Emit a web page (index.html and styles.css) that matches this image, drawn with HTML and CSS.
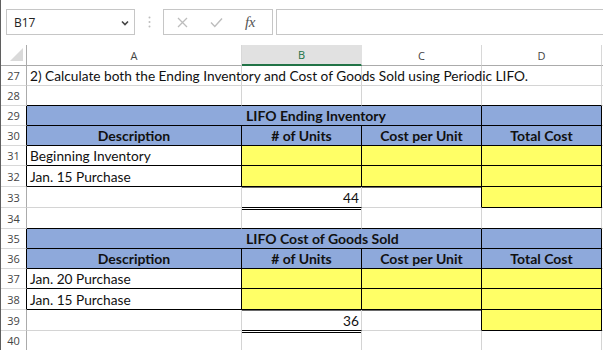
FILE: index.html
```html
<!DOCTYPE html>
<html>
<head>
<meta charset="utf-8">
<link rel="stylesheet" href="styles.css">
</head>
<body>
<div class="app">
  <div class="fbar">
    <div class="namebox">
      <span class="nb-text">B17</span>
      <svg class="chev" width="8" height="6" viewBox="0 0 8 6"><path d="M1 1.5 L4 4.5 L7 1.5" fill="none" stroke="#444" stroke-width="1.6"/></svg>
    </div>
    <div class="dots">
      <svg width="3" height="12" viewBox="0 0 3 12"><circle cx="1.5" cy="1.5" r="1" fill="#bdbdbd"/><circle cx="1.5" cy="6" r="1" fill="#bdbdbd"/><circle cx="1.5" cy="10.5" r="1" fill="#bdbdbd"/></svg>
    </div>
    <div class="fxbox">
      <svg class="ico-x" width="11" height="11" viewBox="0 0 11 11"><path d="M1 1 L10 10 M10 1 L1 10" stroke="#bdbdbd" stroke-width="1.3" fill="none"/></svg>
      <svg class="ico-ok" width="13" height="11" viewBox="0 0 13 11"><path d="M1 5.5 L4.8 9.5 L12 1.5" stroke="#bdbdbd" stroke-width="1.4" fill="none"/></svg>
      <span class="fx">fx</span>
    </div>
    <div class="finput"></div>
  </div>

  <div class="sheet">
    <!-- column headers -->
    <div class="ch corner"><svg width="13" height="13" viewBox="0 0 13 13"><polygon points="13,0 13,13 0,13" fill="#dadada"/></svg></div>
    <div class="ch">A</div>
    <div class="ch sel">B</div>
    <div class="ch">C</div>
    <div class="ch">D</div>
    <div class="ch fill"></div>

    <!-- 27 -->
    <div class="rh">27</div>
    <div class="c nowrap">2) Calculate both the Ending Inventory and Cost of Goods Sold using Periodic LIFO.</div>
    <div class="c"></div>
    <div class="c"></div>
    <div class="c"></div>
    <div class="c fill"></div>

    <!-- 28 -->
    <div class="rh">28</div>
    <div class="c bb"></div>
    <div class="c bb"></div>
    <div class="c bb"></div>
    <div class="c bb"></div>
    <div class="c fill"></div>

    <!-- 29 -->
    <div class="rh hb">29</div>
    <div class="c span3 blue bold br bb title">LIFO Ending Inventory</div>
    <div class="c blue br bb"></div>
    <div class="c fill"></div>

    <!-- 30 -->
    <div class="rh hb">30</div>
    <div class="c blue bold ctr br bb">Description</div>
    <div class="c blue bold ctr br bb"># of Units</div>
    <div class="c blue bold ctr br bb">Cost per Unit</div>
    <div class="c blue bold ctr br bb">Total Cost</div>
    <div class="c fill"></div>

    <!-- 31 -->
    <div class="rh hb">31</div>
    <div class="c br bb">Beginning Inventory</div>
    <div class="c yel br bb"></div>
    <div class="c yel br bb"></div>
    <div class="c yel br bb"></div>
    <div class="c fill"></div>

    <!-- 32 -->
    <div class="rh hb">32</div>
    <div class="c br bb">Jan. 15 Purchase</div>
    <div class="c yel br bb"></div>
    <div class="c yel br bb"></div>
    <div class="c yel br bb"></div>
    <div class="c fill"></div>

    <!-- 33 -->
    <div class="rh">33</div>
    <div class="c"></div>
    <div class="c bb num thicktop">44</div>
    <div class="c br thicktop"></div>
    <div class="c yel br bb"></div>
    <div class="c fill"></div>

    <!-- 34 -->
    <div class="rh">34</div>
    <div class="c bb"></div>
    <div class="c bb dbl"></div>
    <div class="c bb"></div>
    <div class="c bb"></div>
    <div class="c fill"></div>

    <!-- 35 -->
    <div class="rh hb">35</div>
    <div class="c span3 blue bold br bb title">LIFO Cost of Goods Sold</div>
    <div class="c blue br bb"></div>
    <div class="c fill"></div>

    <!-- 36 -->
    <div class="rh hb">36</div>
    <div class="c blue bold ctr br bb">Description</div>
    <div class="c blue bold ctr br bb"># of Units</div>
    <div class="c blue bold ctr br bb">Cost per Unit</div>
    <div class="c blue bold ctr br bb">Total Cost</div>
    <div class="c fill"></div>

    <!-- 37 -->
    <div class="rh hb">37</div>
    <div class="c br bb">Jan. 20 Purchase</div>
    <div class="c yel br bb"></div>
    <div class="c yel br bb"></div>
    <div class="c yel br bb"></div>
    <div class="c fill"></div>

    <!-- 38 -->
    <div class="rh hb">38</div>
    <div class="c br bb">Jan. 15 Purchase</div>
    <div class="c yel br bb"></div>
    <div class="c yel br bb"></div>
    <div class="c yel br bb"></div>
    <div class="c fill"></div>

    <!-- 39 -->
    <div class="rh">39</div>
    <div class="c"></div>
    <div class="c bb num thicktop">36</div>
    <div class="c br thicktop"></div>
    <div class="c yel br bb"></div>
    <div class="c fill"></div>

    <!-- 40 -->
    <div class="rh">40</div>
    <div class="c"></div>
    <div class="c dbl"></div>
    <div class="c"></div>
    <div class="c"></div>
    <div class="c fill"></div>
  </div>
</div>
</body>
</html>
```

FILE: styles.css
```css
html, body {
  margin: 0;
  padding: 0;
  background: #ffffff;
}

.app {
  width: 603px;
  height: 350px;
  box-sizing: border-box;
  border-left: 1px solid #5f5f5f;
  overflow: hidden;
  background: #ffffff;
}

/* ---------- formula bar ---------- */
.fbar {
  height: 45px;
  box-sizing: border-box;
  padding-top: 9px;
  display: flex;
  align-items: flex-start;
}

.namebox {
  margin-left: 5px;
  width: 129px;
  height: 26px;
  box-sizing: border-box;
  border: 1px solid #c6c6c6;
  display: flex;
  align-items: center;
  justify-content: space-between;
  padding: 0 5px 0 7px;
}

.nb-text {
  font-family: "Open Sans", "Noto Sans", sans-serif;
  font-size: 12px;
  color: #222;
}

.chev {
  margin-top: 2px;
}

.dots {
  width: 28px;
  height: 26px;
  display: flex;
  align-items: center;
  justify-content: center;
}

.fxbox {
  width: 110px;
  height: 26px;
  box-sizing: border-box;
  border: 1px solid #c6c6c6;
  display: flex;
  align-items: center;
  padding-left: 13px;
}

.ico-x {
  margin-right: 22px;
}

.ico-ok {
  margin-right: 22px;
}

.fx {
  font-family: "Liberation Serif", "DejaVu Serif", serif;
  font-style: italic;
  font-size: 15px;
  color: #555;
  letter-spacing: -0.5px;
}

.finput {
  margin-left: 3px;
  flex: 1;
  height: 26px;
  box-sizing: border-box;
  border: 1px solid #c6c6c6;
  border-right: none;
}

/* ---------- sheet ---------- */
.sheet {
  display: grid;
  grid-template-columns: 26px 215px 120px 120px 120px 1fr;
  grid-template-rows: 21px 20px 20px 20px 20px 20px 21px 21px 21px 20px 20px 20px 21px 21px 20px;
}

.ch {
  box-sizing: border-box;
  border-right: 1px solid #d8d8d8;
  border-bottom: 1px solid #ababab;
  font-family: "Open Sans", "Noto Sans", sans-serif;
  font-size: 11px;
  color: #444;
  display: flex;
  align-items: center;
  justify-content: center;
}

.ch.corner {
  justify-content: flex-start;
  align-items: flex-start;
  padding: 3px 0 0 9px;
  border-right: 1px solid #ababab;
}

.ch.sel {
  background: #e1e1e1;
  color: #217346;
  border-bottom: 2px solid #217346;
  border-right-color: #e1e1e1;
}

.ch.fill {
  border-right: none;
}

.rh {
  box-sizing: border-box;
  border-right: 1px solid #ababab;
  border-bottom: 1px solid #d8d8d8;
  font-family: "Open Sans", "Noto Sans", sans-serif;
  font-size: 11px;
  color: #444;
  display: flex;
  align-items: center;
  justify-content: center;
}

.rh.hb {
  border-right-color: #000;
}

.c {
  box-sizing: border-box;
  border-right: 1px solid #d4d4d4;
  border-bottom: 1px solid #d4d4d4;
  font-family: "Lato", "Noto Sans", sans-serif;
  font-size: 13.7px;
  color: #111;
  padding: 0 3px 0 3px;
  display: flex;
  align-items: center;
  white-space: nowrap;
  min-width: 0;
}

.c.nowrap {
  overflow: visible;
  position: relative;
  z-index: 1;
}

.c.fill {
  border-right: none;
}

.c.br {
  border-right-color: #000;
}

.c.bb {
  border-bottom-color: #000;
}

.c.blue {
  background: #8ea9db;
}

.c.yel {
  background: #ffff66;
}

.c.bold {
  font-weight: 700;
  font-size: 14px;
}

.c.ctr {
  justify-content: center;
}

.c.span3 {
  grid-column: span 3;
}

.c.title {
  padding-left: 219px;
}

.c.num {
  justify-content: flex-end;
  padding-right: 2px;
}

.c.thicktop {
  box-shadow: inset 0 1px 0 #6a6a6a;
}

.c.dbl {
  box-shadow: inset 0 1px 0 #ffffff, inset 0 2px 0 #000000;
}
```
